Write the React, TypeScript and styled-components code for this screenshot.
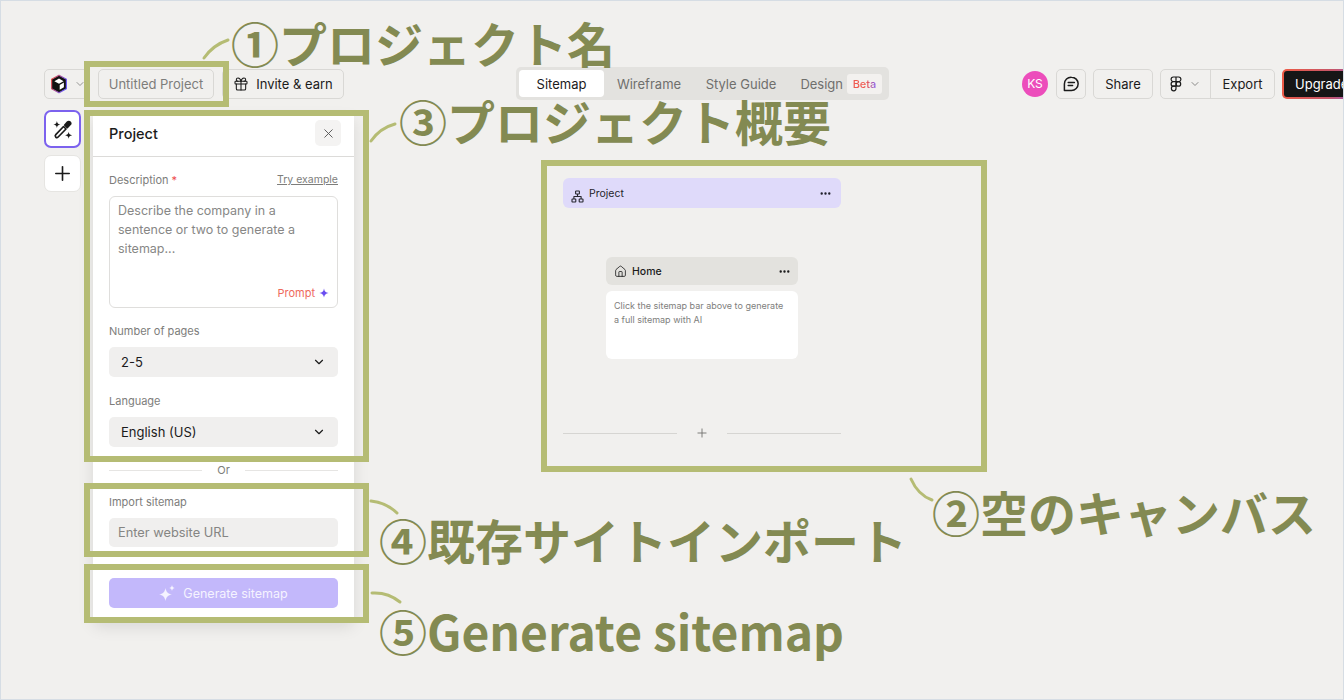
import React from "react";
import styled, { createGlobalStyle } from "styled-components";
import { ChevronDown, Ellipsis, Gift, House, Plus, X } from "lucide-react";

const Global = createGlobalStyle`
  html, body { margin: 0; padding: 0; background: #f1f0ee; }
  * { box-sizing: border-box; }
  body { font-family: Inter, "Noto Sans", sans-serif; color: #1b1b1b; }
`;

const Page = styled.div`
  position: relative;
  width: 1344px;
  height: 700px;
  overflow: hidden;
  background: #f1f0ee;
  padding-top: 67px;
  &::after {
    content: "";
    position: absolute;
    inset: 0;
    border: 1px solid #d6dde4;
    pointer-events: none;
  }
`;

const TopBar = styled.header`
  display: grid;
  grid-template-columns: 472px 373px 1fr;
  align-items: center;
  height: 33px;
  padding-left: 44px;
`;

const LeftGroup = styled.div`
  display: flex;
  align-items: center;
`;

const OutlineButton = styled.div<{ $width?: number; $muted?: boolean; $ml?: number }>`
  display: flex;
  align-items: center;
  justify-content: center;
  gap: 7px;
  flex: none;
  height: 30px;
  ${(p) => (p.$width ? `width: ${p.$width}px;` : "")}
  margin-left: ${(p) => p.$ml ?? 0}px;
  border: 1px solid #d9d8d5;
  border-radius: 5px;
  font-size: 13px;
  font-weight: 400;
  color: ${(p) => (p.$muted ? "#7d7d7b" : "#1b1b1b")};
  background: transparent;
  white-space: nowrap;
`;

const LogoButton = styled(OutlineButton)`
  justify-content: flex-start;
  gap: 5px;
  padding-left: 4px;
  color: #8a8a88;
`;

const Tabs = styled.nav`
  display: flex;
  align-items: center;
  height: 33px;
  padding: 3px;
  background: #e3e2df;
  border-radius: 5px;
`;

const Tab = styled.div<{ $active?: boolean; $width: number }>`
  display: flex;
  align-items: center;
  justify-content: center;
  height: 27px;
  width: ${(p) => p.$width}px;
  border-radius: 4px;
  font-size: 13px;
  font-weight: 400;
  color: ${(p) => (p.$active ? "#1b1b1b" : "#6f6f6d")};
  background: ${(p) => (p.$active ? "#ffffff" : "transparent")};
`;

const DesignTab = styled(Tab)`
  justify-content: flex-end;
  gap: 4px;
  padding-right: 4px;
`;

const BetaChip = styled.span`
  display: flex;
  justify-content: center;
  width: 35px;
  height: 20px;
  background: #f3f1ef;
  border-radius: 3px;
`;

const BetaText = styled.span`
  font-size: 11px;
  line-height: 20px;
  font-weight: 500;
  background-image: linear-gradient(90deg, #f0594f 60%, #7d5cf5);
  background-clip: text;
  -webkit-background-clip: text;
  color: transparent;
`;

const RightGroup = styled.div`
  display: flex;
  align-items: center;
  padding-left: 133px;
`;

const Avatar = styled.div`
  display: flex;
  align-items: center;
  justify-content: center;
  width: 26px;
  height: 26px;
  border-radius: 50%;
  background: #ec4dbb;
  color: #fff;
  font-size: 12px;
  font-weight: 400;
  flex: none;
`;

const SplitButton = styled.div`
  display: flex;
  align-items: center;
  flex: none;
  width: 115px;
  height: 30px;
  margin-left: 7px;
  border: 1px solid #d9d8d5;
  border-radius: 5px;
`;

const FigmaPart = styled.div`
  display: flex;
  align-items: center;
  gap: 7px;
  width: 50px;
  height: 100%;
  padding-left: 9px;
  border-right: 1px solid #d9d8d5;
  color: #8a8a88;
`;

const ExportPart = styled.div`
  flex: 1;
  text-align: center;
  font-size: 13px;
  font-weight: 400;
`;

const Upgrade = styled.div`
  flex: none;
  width: 90px;
  height: 30px;
  margin-left: 7px;
  padding: 2px;
  border-radius: 5px;
  background: linear-gradient(100deg, #ee5a44, #c4566a 55%, #7d5cf5);
`;

const UpgradeInner = styled.div`
  display: flex;
  align-items: center;
  height: 100%;
  padding-left: 11px;
  border-radius: 3px;
  background: #161616;
  color: #fff;
  font-size: 13px;
  font-weight: 400;
`;

const Main = styled.div`
  display: flex;
  align-items: flex-start;
  margin-top: 10px;
  padding-left: 44px;
`;

const ToolColumn = styled.div`
  display: flex;
  flex-direction: column;
  gap: 7px;
  width: 37px;
  flex: none;
`;

const ToolButton = styled.div<{ $active?: boolean }>`
  display: flex;
  align-items: center;
  justify-content: center;
  width: 37px;
  height: ${(p) => (p.$active ? 38 : 37)}px;
  border-radius: 7px;
  background: #fff;
  border: ${(p) => (p.$active ? "2px solid #7c62ee" : "1px solid #e6e5e2")};
  color: #1b1b1b;
`;

const Panel = styled.aside`
  display: flex;
  flex-direction: column;
  flex: none;
  width: 261px;
  height: 507px;
  margin: 6px 0 0 12px;
  background: #fff;
  border-radius: 0 0 6px 6px;
  box-shadow: 0 4px 16px rgba(0, 0, 0, 0.1);
`;

const PanelHeader = styled.div`
  display: flex;
  align-items: center;
  justify-content: space-between;
  height: 41px;
  padding: 0 13px 6px 16px;
  border-bottom: 1px solid #dcdbd9;
  font-size: 14.5px;
  font-weight: 500;
`;

const CloseButton = styled.div`
  display: flex;
  align-items: center;
  justify-content: center;
  width: 26px;
  height: 26px;
  border-radius: 5px;
  background: #f4f3f2;
  color: #555;
`;

const PanelBody = styled.div`
  display: flex;
  flex-direction: column;
  padding: 15px 16px;
`;

const LabelRow = styled.div`
  display: flex;
  justify-content: space-between;
  margin-bottom: 8px;
`;

const FieldLabel = styled.label`
  font-size: 11px;
  line-height: 16px;
  color: #7d7d7b;
`;

const Required = styled.span`
  color: #ee4b4b;
`;

const TryExample = styled.a`
  font-size: 10.5px;
  line-height: 16px;
  color: #7d7d7b;
  text-decoration: underline;
`;

const TextArea = styled.div`
  position: relative;
  height: 112px;
  margin-bottom: 15px;
  padding: 4px 8px;
  border: 1px solid #dfdedc;
  border-radius: 6px;
  font-size: 12.5px;
  line-height: 19px;
  color: #878786;
`;

const PromptTag = styled.div`
  position: absolute;
  right: 8px;
  bottom: 6px;
  display: flex;
  align-items: center;
  gap: 4px;
  font-size: 11px;
  line-height: 16px;
  color: #ee6a5d;
`;

const Select = styled.div<{ $last?: boolean }>`
  display: flex;
  align-items: center;
  justify-content: space-between;
  height: 30px;
  margin-bottom: ${(p) => (p.$last ? 15 : 16)}px;
  padding: 0 12px;
  border-radius: 5px;
  background: #f0efee;
  font-size: 13px;
  font-weight: 400;
`;

const OrRow = styled.div`
  display: flex;
  align-items: center;
  gap: 15px;
  height: 16px;
  margin-bottom: 16px;
  font-size: 11px;
  color: #7d7d7b;
`;

const OrLine = styled.div`
  flex: 1;
  height: 1px;
  background: #e6e5e3;
`;

const UrlInput = styled.div`
  display: flex;
  align-items: center;
  height: 29px;
  margin-bottom: 31px;
  padding: 0 9px;
  border-radius: 5px;
  background: #f0efee;
  font-size: 12.8px;
  color: #858583;
`;

const GenerateButton = styled.div`
  display: flex;
  align-items: center;
  justify-content: center;
  gap: 8px;
  height: 30px;
  border-radius: 5px;
  background: #c3b8fb;
  color: #f5f3ff;
  font-size: 12.5px;
  font-weight: 400;
`;

const Canvas = styled.section`
  display: flex;
  flex-direction: column;
  align-items: center;
  flex: none;
  width: 278px;
  margin-left: 209px;
  padding-top: 68px;
`;

const SitemapBar = styled.div`
  display: flex;
  align-items: center;
  justify-content: space-between;
  width: 100%;
  height: 30px;
  padding: 0 9px 0 8px;
  border-radius: 6px;
  background: #dfdafa;
  font-size: 10.5px;
  color: #1f1f2a;
`;

const BarTitle = styled.div`
  display: flex;
  align-items: center;
  gap: 5px;
`;

const HomeColumn = styled.div`
  display: flex;
  flex-direction: column;
  gap: 6px;
  width: 192px;
  margin-top: 49px;
`;

const HomeBar = styled.div`
  display: flex;
  align-items: center;
  justify-content: space-between;
  height: 28px;
  padding: 0 7px 0 8px;
  border-radius: 6px;
  background: #e3e2de;
  font-size: 10.5px;
  font-weight: 500;
`;

const HomeCard = styled.div`
  height: 68px;
  padding: 8px;
  border-radius: 6px;
  background: #fff;
  font-size: 9px;
  line-height: 14px;
  color: #7e7e7c;
`;

const AddRow = styled.div`
  display: flex;
  align-items: center;
  justify-content: space-between;
  width: 100%;
  margin-top: 67px;
  color: #6e6e6c;
`;

const AddLine = styled.div`
  width: 114px;
  height: 1px;
  background: #d6d5d2;
`;

const Frame = styled.div<{ $l: number; $t: number; $w: number; $h: number }>`
  position: absolute;
  left: ${(p) => p.$l}px;
  top: ${(p) => p.$t}px;
  width: ${(p) => p.$w}px;
  height: ${(p) => p.$h}px;
  border: 6px solid #b5bc74;
`;

const Note = styled.div<{ $l: number; $t: number }>`
  position: absolute;
  left: ${(p) => p.$l}px;
  top: ${(p) => p.$t}px;
  font-family: "Noto Sans CJK JP", "Noto Sans", sans-serif;
  font-size: 48px;
  line-height: 56px;
  font-weight: 700;
  color: #838a52;
  white-space: nowrap;
`;

const Curves = styled.svg`
  position: absolute;
  inset: 0;
  pointer-events: none;
`;

const Logo = () => (
  <svg width="20" height="20" viewBox="0 0 20 20">
    <defs>
      <linearGradient id="logoEdge" x1="0" y1="0" x2="1" y2="0.4">
        <stop offset="0" stopColor="#f0503f" />
        <stop offset="1" stopColor="#6d5cf5" />
      </linearGradient>
    </defs>
    <path d="M10 1.2 17.4 5.2v9.6L10 18.8 2.6 14.8V5.2z" fill="#111" stroke="url(#logoEdge)" strokeWidth="1.2" strokeLinejoin="round" />
    <path d="M10 4.6 14.6 7.2 10 9.8 5.4 7.2z" fill="#fff" />
    <path d="M10.7 10.9 14.9 8.5v4.8l-4.2 2.4z" fill="#fff" />
  </svg>
);

const WandIcon = () => (
  <svg width="21" height="21" viewBox="0 0 24 24" fill="none" stroke="#1b1b1b" strokeWidth="1.9" strokeLinejoin="round">
    <path d="M13.2 8.6 16 11.4 7 20.6c-.7.7-2 .8-2.7.1-.8-.8-.7-2 0-2.8z" />
    <path d="M14.6 7 17.6 3.6c.9-1 2.3-1 3.1-.2.8.8.8 2.2-.1 3.1L17.4 9.8z" fill="#1b1b1b" />
    <path stroke="none" fill="#1b1b1b" d="M5.6 2.4C6 5 7 6 9.6 6.4 7 6.8 6 7.8 5.6 10.4 5.2 7.8 4.2 6.8 1.6 6.4 4.2 6 5.2 5 5.6 2.4z" />
    <path stroke="none" fill="#1b1b1b" d="M19 14.6c.4 2.6 1.4 3.6 4 4-2.6.4-3.6 1.4-4 4-.4-2.6-1.4-3.6-4-4 2.6-.4 3.6-1.4 4-4z" />
  </svg>
);

const SitemapIcon = () => (
  <svg width="13" height="13" viewBox="0 0 13 13" fill="none" stroke="#26262e" strokeWidth="1.1" strokeLinejoin="round">
    <rect x="4.6" y="1" width="3.8" height="3" rx="0.6" />
    <rect x="1" y="9" width="3.8" height="3" rx="0.6" />
    <rect x="8.2" y="9" width="3.8" height="3" rx="0.6" />
    <path d="M6.5 4v2.5M2.9 9V6.5h7.2V9" />
  </svg>
);

const SitemapIconWrap = styled.span`
  display: flex;
  margin: 6px 0 0 0;
`;

const ChatIcon = () => (
  <svg width="18" height="18" viewBox="0 0 18 18" fill="none" stroke="#1b1b1b" strokeWidth="1.5" strokeLinecap="round" strokeLinejoin="round">
    <path d="M9.5 2.2a6.6 6.6 0 0 1 0 13.3H2.4v-6.6a6.7 6.7 0 0 1 7.1-6.7z" />
    <path d="M6.2 7.4h6.2M6.2 10.4h4.4" />
  </svg>
);

const FigmaIcon = () => (
  <svg width="12" height="16" viewBox="0 0 12 16" fill="none" stroke="#1b1b1b" strokeWidth="1.2">
    <path d="M6 1H3.4a2.3 2.3 0 0 0 0 4.6H6zM6 1h2.6a2.3 2.3 0 0 1 0 4.6H6zM6 5.6H3.4a2.3 2.3 0 0 0 0 4.6H6z" />
    <circle cx="8.4" cy="7.9" r="2.3" />
    <path d="M6 10.2H3.4a2.3 2.3 0 1 0 2.6 2.3z" />
  </svg>
);

const Star = ({ size, color }: { size: number; color: string }) => (
  <svg width={size} height={size} viewBox="0 0 12 12" fill={color}>
    <path d="M6 0.5C6.6 4 8 5.4 11.5 6 8 6.6 6.6 8 6 11.5 5.4 8 4 6.6 0.5 6 4 5.4 5.4 4 6 0.5z" />
  </svg>
);

const SparkleIcon = () => (
  <svg width="16" height="16" viewBox="0 0 16 16" fill="#f5f3ff">
    <path d="M6.5 3C7.2 7 9 8.8 13 9.5 9 10.2 7.2 12 6.5 16 5.8 12 4 10.2 0 9.5 4 8.8 5.8 7 6.5 3z" />
    <path d="M13 0c.3 1.7 1.3 2.7 3 3-1.7.3-2.7 1.3-3 3-.3-1.7-1.3-2.7-3-3 1.7-.3 2.7-1.3 3-3z" />
  </svg>
);

export default function App() {
  return (
    <>
      <Global />
      <Page>
        <TopBar>
          <LeftGroup>
            <LogoButton $width={46}>
              <Logo />
              <ChevronDown size={12} strokeWidth={1.8} />
            </LogoButton>
            <OutlineButton $width={116} $muted $ml={8}>
              Untitled Project
            </OutlineButton>
            <OutlineButton $width={122} $ml={8}>
              <Gift size={16} strokeWidth={1.6} />
              Invite &amp; earn
            </OutlineButton>
          </LeftGroup>
          <Tabs>
            <Tab $active $width={85}>Sitemap</Tab>
            <Tab $width={90}>Wireframe</Tab>
            <Tab $width={94}>Style Guide</Tab>
            <DesignTab $width={98}>
              Design
              <BetaChip>
                <BetaText>Beta</BetaText>
              </BetaChip>
            </DesignTab>
          </Tabs>
          <RightGroup>
            <Avatar>KS</Avatar>
            <OutlineButton $width={30} $ml={8}>
              <ChatIcon />
            </OutlineButton>
            <OutlineButton $width={60} $ml={7}>Share</OutlineButton>
            <SplitButton>
              <FigmaPart>
                <FigmaIcon />
                <ChevronDown size={12} />
              </FigmaPart>
              <ExportPart>Export</ExportPart>
            </SplitButton>
            <Upgrade>
              <UpgradeInner>Upgrade</UpgradeInner>
            </Upgrade>
          </RightGroup>
        </TopBar>

        <Main>
          <ToolColumn>
            <ToolButton $active>
              <WandIcon />
            </ToolButton>
            <ToolButton>
              <Plus size={23} strokeWidth={1.7} />
            </ToolButton>
          </ToolColumn>

          <Panel>
            <PanelHeader>
              Project
              <CloseButton>
                <X size={15} strokeWidth={1.5} />
              </CloseButton>
            </PanelHeader>
            <PanelBody>
              <LabelRow>
                <FieldLabel>
                  Description <Required>*</Required>
                </FieldLabel>
                <TryExample>Try example</TryExample>
              </LabelRow>
              <TextArea>
                Describe the company in a sentence or two to generate a sitemap...
                <PromptTag>
                  Prompt <Star size={10} color="#6a4df0" />
                </PromptTag>
              </TextArea>
              <LabelRow>
                <FieldLabel>Number of pages</FieldLabel>
              </LabelRow>
              <Select>
                2-5
                <ChevronDown size={14} strokeWidth={2} />
              </Select>
              <LabelRow>
                <FieldLabel>Language</FieldLabel>
              </LabelRow>
              <Select $last>
                English (US)
                <ChevronDown size={14} strokeWidth={2} />
              </Select>
              <OrRow>
                <OrLine />
                Or
                <OrLine />
              </OrRow>
              <LabelRow>
                <FieldLabel>Import sitemap</FieldLabel>
              </LabelRow>
              <UrlInput>Enter website URL</UrlInput>
              <GenerateButton>
                <SparkleIcon />
                Generate sitemap
              </GenerateButton>
            </PanelBody>
          </Panel>

          <Canvas>
            <SitemapBar>
              <BarTitle>
                <SitemapIconWrap>
                  <SitemapIcon />
                </SitemapIconWrap>
                Project
              </BarTitle>
              <Ellipsis size={13} strokeWidth={2.4} />
            </SitemapBar>
            <HomeColumn>
              <HomeBar>
                <BarTitle>
                  <House size={13} strokeWidth={1.5} />
                  Home
                </BarTitle>
                <Ellipsis size={13} strokeWidth={2.4} />
              </HomeBar>
              <HomeCard>Click the sitemap bar above to generate a full sitemap with AI</HomeCard>
            </HomeColumn>
            <AddRow>
              <AddLine />
              <Plus size={14} strokeWidth={1.5} />
              <AddLine />
            </AddRow>
          </Canvas>
        </Main>

        <Frame $l={84} $t={61} $w={145} $h={46} />
        <Frame $l={84} $t={110} $w={285} $h={352} />
        <Frame $l={84} $t={483} $w={285} $h={74} />
        <Frame $l={84} $t={564} $w={285} $h={59} />
        <Frame $l={541} $t={160} $w={446} $h={312} />

        <Curves width="1344" height="700" viewBox="0 0 1344 700" fill="none" stroke="#b5bc74" strokeWidth="3" strokeLinecap="round">
          <path d="M204 58Q213 45 228 40" />
          <path d="M371 141Q380 128 395 124" />
          <path d="M371 501Q387 503 397 513" />
          <path d="M372 593Q388 592 400 602" />
          <path d="M911 479Q918 495 932 500" />
        </Curves>

        <Note $l={231} $t={14}>①プロジェクト名</Note>
        <Note $l={399} $t={92}>③プロジェクト概要</Note>
        <Note $l={932} $t={483}>②空のキャンバス</Note>
        <Note $l={379} $t={511}>④既存サイトインポート</Note>
        <Note $l={379} $t={602}>⑤Generate sitemap</Note>
      </Page>
    </>
  );
}
